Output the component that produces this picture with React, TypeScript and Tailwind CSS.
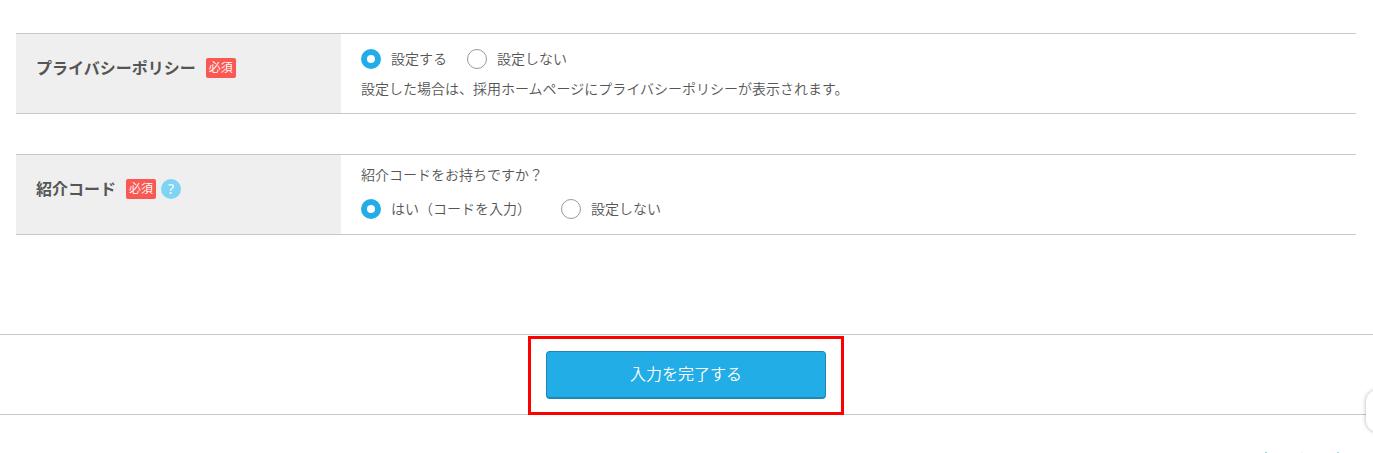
import type { ReactNode } from 'react';
import clsx from 'clsx';

interface FormRowProps {
  title: string;
  help?: boolean;
  className?: string;
  children: ReactNode;
}

function FormRow({ title, help, className, children }: FormRowProps) {
  return (
    <section className="flex h-[81px] border-y border-[#c8c8c8]">
      <div className="flex w-[325px] shrink-0 items-start bg-[#efefef] pt-6 pl-5">
        <h2 className="text-base leading-[18px] font-bold whitespace-nowrap">{title}</h2>
        <span className="ml-2.5 h-5 w-[30px] rounded-xs bg-[#f95853] text-center text-xs leading-[18px] text-white">必須</span>
        {help && (
          <span className="ml-[5px] flex size-5 items-center justify-center rounded-full bg-[#7fd3f3]">
            <span className="font-['Noto_Sans',sans-serif] text-sm leading-5 font-normal text-white">?</span>
          </span>
        )}
      </div>
      <div className={clsx('flex flex-col pl-5 text-sm', className)}>{children}</div>
    </section>
  );
}

function Radio({ label, checked = false }: { label: string; checked?: boolean }) {
  return (
    <label className="flex items-center gap-2.5">
      <span className={clsx('size-5 shrink-0 rounded-full bg-white', checked ? 'border-6 border-[#22ade6]' : 'border border-[#999]')} />
      <span className="pb-0.5 leading-[18px] whitespace-nowrap">{label}</span>
    </label>
  );
}

export default function App() {
  return (
    <main className="relative h-[453px] overflow-hidden bg-white pt-[33px] font-['Noto_Sans_CJK_JP',sans-serif] font-[350] text-[#555]">
      <div className="flex w-[1356px] flex-col gap-10 pl-4">
        <FormRow title="プライバシーポリシー" className="pt-2.5">
          <div className="flex h-[30px] items-center gap-5">
            <Radio label="設定する" checked />
            <Radio label="設定しない" />
          </div>
          <p className="leading-7">設定した場合は、採用ホームページにプライバシーポリシーが表示されます。</p>
        </FormRow>
        <FormRow title="紹介コード" help className="pt-[5px]">
          <p className="leading-7">紹介コードをお持ちですか？</p>
          <div className="mt-1.5 flex h-[30px] items-center gap-[30px]">
            <Radio label="はい（コードを入力）" checked />
            <Radio label="設定しない" />
          </div>
        </FormRow>
      </div>

      <footer className="mt-[99px] flex h-[81px] justify-center border-y border-[#c8c8c8] pt-px">
        <div className="mr-px h-[79px] w-[316px] border-3 border-[#f00] px-[15px] pt-3">
          <button className="block h-12 w-full rounded border border-b-2 border-[#1e87b3] bg-[#22ade6] pb-[3px] text-base text-white">入力を完了する</button>
        </div>
      </footer>

      {/* side tab, mostly off screen */}
      <div className="absolute top-[390px] -right-9 h-[42px] w-[43px] rounded-xl bg-white shadow-[0_0_4px_rgba(0,0,0,0.3)]" />
      {/* tips of the link text below the fold */}
      <div className="absolute right-[34px] bottom-0 flex h-px w-[74px] justify-between">
        <span className="w-0.5 bg-[#90cfe5]" />
        <span className="w-0.5 bg-[#f5f5f5]" />
        <span className="w-0.5 bg-[#a5d9de]" />
      </div>
    </main>
  );
}
